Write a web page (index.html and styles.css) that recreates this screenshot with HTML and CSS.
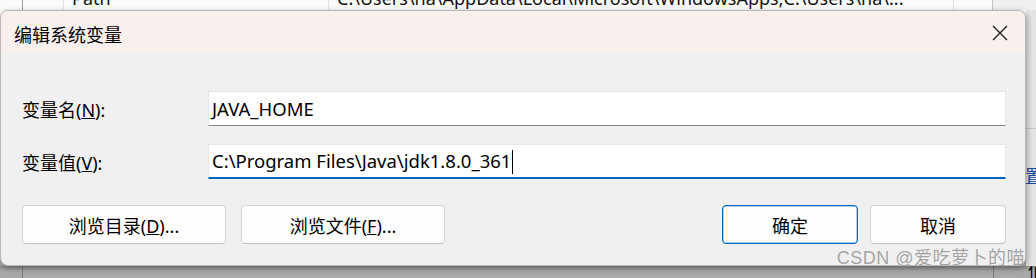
FILE: index.html
```html
<!DOCTYPE html>
<html lang="zh-CN">
<head>
    <meta charset="UTF-8">
    <meta name="viewport" content="width=device-width, initial-scale=1.0">
    <title>编辑系统变量</title>
    <link rel="stylesheet" href="styles.css">
</head>
<body>

    <!-- parent window row peeking out above the dialog -->
    <div class="bg-row">
        <span class="cell cell-a"></span>
        <span class="cell cell-b"></span>
        <span class="cell cell-name"><span class="clip-text">Path</span></span>
        <span class="cell cell-value"><span class="clip-text">C:\Users\na\AppData\Local\Microsoft\WindowsApps;C:\Users\na\...</span></span>
        <span class="cell cell-c"></span>
        <span class="cell cell-d"></span>
    </div>

    <div class="middle">
        <div class="dialog">
            <div class="titlebar">
                <span class="title">编辑系统变量</span>
                <svg class="close" width="16" height="16" viewBox="0 0 16 16">
                    <path d="M1 1 L15 15 M15 1 L1 15" stroke="#1a1a1a" stroke-width="1.3" fill="none"/>
                </svg>
            </div>

            <div class="body">
                <div class="field">
                    <label>变量名(<u>N</u>):</label>
                    <div class="input">JAVA_HOME</div>
                </div>
                <div class="field second">
                    <label>变量值(<u>V</u>):</label>
                    <div class="input focused">C:\Program Files\Java\jdk1.8.0_361<span class="caret"></span></div>
                </div>

                <div class="buttons">
                    <button class="btn wide">浏览目录(<u>D</u>)...</button>
                    <button class="btn wide">浏览文件(<u>F</u>)...</button>
                    <span class="spacer"></span>
                    <button class="btn small primary">确定</button>
                    <button class="btn small">取消</button>
                </div>
            </div>

            <div class="watermark">CSDN @爱吃萝卜的喵</div>
        </div>
        <div class="side"><span class="side-char">置</span></div>
    </div>

    <div class="bg-bottom">
        <span class="bottom-line first"></span>
        <span class="spacer"></span>
        <span class="bottom-line last"></span>
        <span class="bottom-char">值</span>
    </div>

</body>
</html>
```

FILE: styles.css
```css
body { margin: 0; width: 1036px; height: 278px; overflow: hidden; background: #a9a9a9; font-family: "Noto Sans", "Noto Sans CJK SC", sans-serif; color: #000; }

/* parent window behind */
.bg-row { display: flex; height: 10px; background: #fbfbfb; overflow: hidden; }
.cell { height: 10px; overflow: hidden; border-left: 1px solid #e3e3e3; box-sizing: border-box; }
.cell-a { width: 22px; border-left: none; }
.cell-b { width: 41px; border-left-color: #9a9a9a; }
.cell-name { width: 265px; padding-left: 8px; }
.cell-value { width: 625px; padding-left: 8px; }
.cell-c { width: 39px; }
.cell-d { flex: 1; border-left-color: #c4c4c4; background: #f0f0f0; }
.clip-text { display: block; font-size: 18px; line-height: 20px; margin-top: -12px; white-space: nowrap; color: #111; }

.middle { display: flex; height: 256px; background: linear-gradient(#fbfbfb 0 10px, #a9a9a9 10px); }

.dialog { position: relative; width: 1026px; height: 256px; background: #f0f0f0; border-radius: 8px; border: 1px solid #b8b8b8; box-sizing: border-box; box-shadow: 1px 2px 6px rgba(0, 0, 0, 0.35); }

.titlebar { display: flex; align-items: center; height: 42px; padding: 0 17px 0 13px; background: #f9f0ee; border-radius: 7px 7px 0 0; }
.title { flex: 1; font-size: 18px; padding-top: 3px; }
.close { display: block; margin-top: 1px; }

.body { padding: 38px 19px 0 21px; }
.field { display: grid; grid-template-columns: 186px 1fr; align-items: center; height: 35px; }
.field.second { margin-top: 18px; }
.field label { font-size: 18px; }
.input { height: 35px; box-sizing: border-box; background: #fff; border: 1px solid #e6e6e6; border-bottom-color: #878787; padding: 1px 0 0 3px; font-size: 18.5px; line-height: 31px; white-space: nowrap; }
.input.focused { border-bottom: 2px solid #0067c0; line-height: 30px; }
.caret { display: inline-block; width: 1px; height: 24px; background: #000; vertical-align: -6px; margin-left: 1px; }

.buttons { display: flex; margin-top: 26px; }
.btn { height: 39px; background: #fdfdfd; border: 1px solid #d3d3d3; border-bottom-color: #c2c2c2; border-radius: 4px; font-family: inherit; font-size: 18px; color: #000; padding: 0; }
.btn.wide { width: 204px; margin-right: 15px; }
.btn.small { width: 136px; margin-left: 12px; }
.btn.primary { border: 1px solid #0067c0; box-shadow: inset 0 0 0 0.5px #5a9ad6; margin-left: 0; }
.spacer { flex: 1; }

.watermark { position: absolute; right: 0; bottom: -4px; font-family: "Liberation Sans", "Noto Sans CJK SC", sans-serif; font-size: 18px; color: rgba(140, 140, 140, 0.8); text-shadow: 0 0 1px rgba(255, 255, 255, 0.7); white-space: nowrap; letter-spacing: 0.5px; }

.side { flex: 1; background: linear-gradient(#e4e4e4 0 118px, #c9c9c9 118px 119px, #e4e4e4 119px); overflow: hidden; }
.side-char { display: block; margin: 152px 0 0 -1px; font-size: 18px; color: #1a4aa0; }

.bg-bottom { display: flex; height: 12px; background: linear-gradient(#8e8e8e, #a9a9a9 5px); overflow: hidden; }
.bottom-line { width: 1px; height: 12px; background: #7c7c7c; }
.bottom-line.first { margin-left: 22px; }
.bottom-line.last { margin-right: 34px; }
.bottom-char { margin-top: -5px; font-size: 18px; line-height: 20px; color: #000; width: 8px; }
```
